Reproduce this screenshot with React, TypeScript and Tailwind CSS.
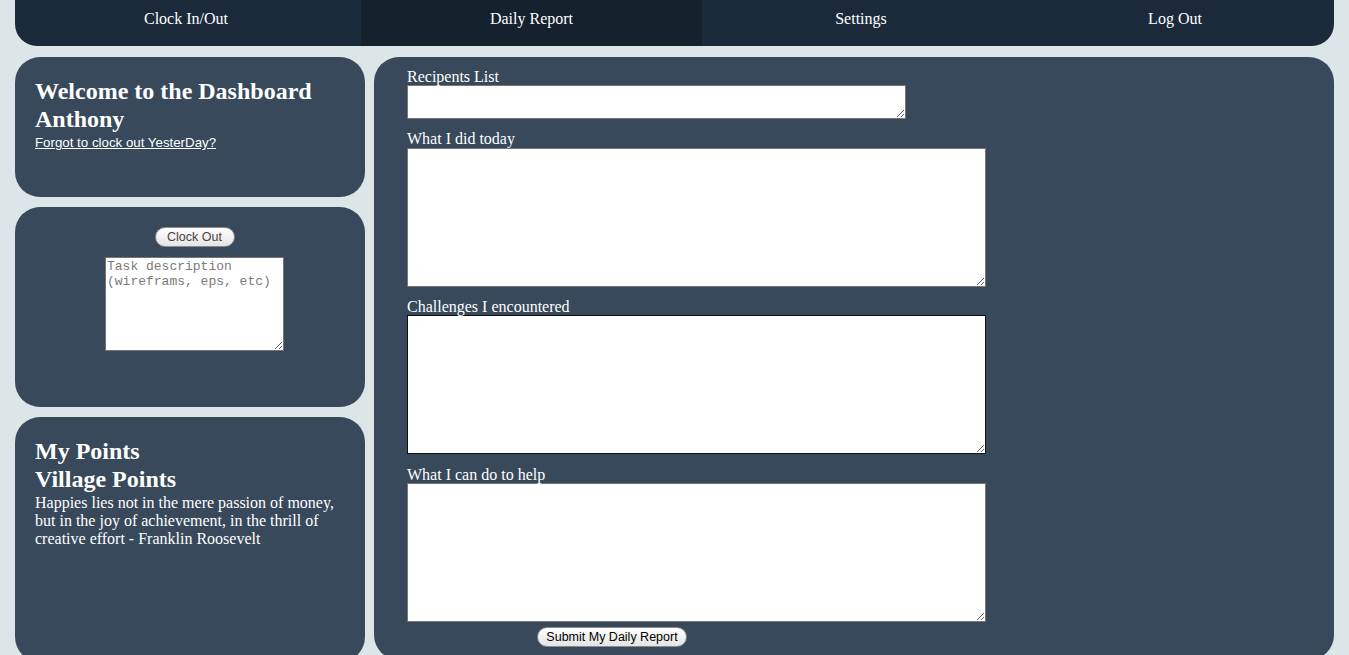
export default function App() {
  const serif = "font-['Liberation_Serif','Times_New_Roman',serif]";
  const sans = "font-['Liberation_Sans',Arial,sans-serif]";
  const mono = "font-['Liberation_Mono','Courier_New',monospace]";

  return (
    <div className={`min-h-screen w-full overflow-hidden bg-[#dce5e8] px-[15px] ${serif}`}>
      {/* NAV */}
      <nav className="flex h-[46px] w-full overflow-hidden rounded-b-[22px] bg-[#1a2a3b] pb-[8px] text-base text-white">
        <a className="flex w-[346px] items-center justify-center pr-[4px]">Clock In/Out</a>
        <a className="-mb-[8px] flex w-[341px] items-center justify-center bg-[#15212d] pb-[8px]">Daily Report</a>
        <a className="flex w-[318px] items-center justify-center">Settings</a>
        <a className="flex flex-1 items-center justify-center pr-[4px]">Log Out</a>
      </nav>

      <div className="mt-[11px] flex gap-[9px]">
        {/* LEFT COLUMN */}
        <div className="flex w-[350px] shrink-0 flex-col gap-[10px]">
          <section className="h-[140px] rounded-[25px] bg-[#37495a] px-5 pt-5 text-white">
            <h1 className="text-2xl font-bold leading-[28px]">
              Welcome to the Dashboard
              <br />
              Anthony
            </h1>
            <a className={`mt-[2px] block text-[13.3px] leading-[16px] underline ${sans}`}>
              Forgot to clock out YesterDay?
            </a>
          </section>

          <section className="flex h-[200px] flex-col items-center rounded-[25px] bg-[#37495a] pl-[9px] pt-5">
            <button
              className={`h-[20px] w-[80px] rounded-full border border-[#8a8a8a] bg-gradient-to-b from-[#ffffff] to-[#e4e4e4] text-[12.5px] leading-none text-[#444] ${sans}`}
            >
              Clock Out
            </button>
            <textarea
              placeholder="Task description (wireframs, eps, etc)"
              className={`mt-[10px] h-[94px] w-[179px] border border-[#767676] bg-white p-[1px] text-[13px] leading-[15px] text-black placeholder:text-[#7a7a7a] ${mono}`}
            />
          </section>

          <section className="h-[245px] rounded-[25px] bg-[#37495a] px-5 pt-5 text-white">
            <h2 className="text-2xl font-bold leading-[28px]">
              My Points
              <br />
              Village Points
            </h2>
            <p className="pt-[1px] text-base leading-[18px]">
              Happies lies not in the mere passion of money, but in the joy of achievement, in the thrill of creative
              effort - Franklin Roosevelt
            </p>
          </section>
        </div>

        {/* DAILY REPORT FORM */}
        <main className="h-[603px] flex-1 rounded-[25px] bg-[#37495a] pl-[33px] pt-[10px] text-white">
          <label className="block pt-[1px] text-base leading-[17px]">Recipents List</label>
          <textarea className="block h-[34px] w-[499px] border border-[#767676] bg-white text-black" />

          <label className="mt-[11px] block text-base leading-[18px]">What I did today</label>
          <textarea className="block h-[139px] w-[579px] border border-[#767676] bg-white text-black" />

          <label className="mt-[11px] block text-base leading-[17px]">Challenges I encountered</label>
          <textarea className="block h-[139px] w-[579px] border border-[#111] bg-white text-black" />

          <label className="mt-[12px] block text-base leading-[17px]">What I can do to help</label>
          <textarea className="block h-[139px] w-[579px] border border-[#767676] bg-white text-black" />

          <button
            className={`ml-[130px] mt-[5px] h-[20px] w-[150px] rounded-full border border-[#8a8a8a] bg-gradient-to-b from-[#ffffff] to-[#e4e4e4] text-[12.5px] leading-none text-black ${sans}`}
          >
            Submit My Daily Report
          </button>
        </main>
      </div>
    </div>
  );
}
